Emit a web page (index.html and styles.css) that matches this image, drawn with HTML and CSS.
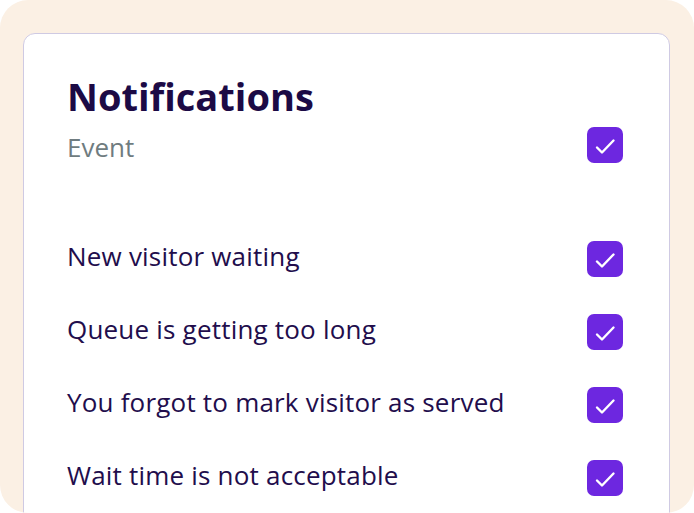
FILE: index.html
```html
<!DOCTYPE html>
<html lang="en">
<head>
  <meta charset="UTF-8">
  <meta name="viewport" content="width=device-width, initial-scale=1.0">
  <title>Notifications</title>
  <link rel="stylesheet" href="styles.css">
</head>
<body>

  <div class="frame">
    <div class="card">
      <h1>Notifications</h1>

      <div class="row head-row">
        <span class="event">Event</span>
        <span class="check"><svg viewBox="0 0 36 36"><polyline points="10,20.5 15,25.5 26.5,13.5"/></svg></span>
      </div>

      <div class="list">
        <div class="row">
          <span class="label">New visitor waiting</span>
          <span class="check"><svg viewBox="0 0 36 36"><polyline points="10,20.5 15,25.5 26.5,13.5"/></svg></span>
        </div>
        <div class="row">
          <span class="label">Queue is getting too long</span>
          <span class="check"><svg viewBox="0 0 36 36"><polyline points="10,20.5 15,25.5 26.5,13.5"/></svg></span>
        </div>
        <div class="row">
          <span class="label">You forgot to mark visitor as served</span>
          <span class="check"><svg viewBox="0 0 36 36"><polyline points="10,20.5 15,25.5 26.5,13.5"/></svg></span>
        </div>
        <div class="row">
          <span class="label">Wait time is not acceptable</span>
          <span class="check"><svg viewBox="0 0 36 36"><polyline points="10,20.5 15,25.5 26.5,13.5"/></svg></span>
        </div>
      </div>
    </div>
  </div>

</body>
</html>
```

FILE: styles.css
```css
* { margin: 0; padding: 0; box-sizing: border-box; font-family: 'Open Sans', 'Noto Sans', sans-serif; }
html, body { height: 100%; background: #ffffff; }

/* Outer beige panel */
.frame {
  height: 100%;
  background: #fbf0e4;
  border-radius: 28px;
  overflow: hidden;
  padding: 33px 24px 0 23px;
}

/* Card */
.card {
  background: #ffffff;
  border: 1.5px solid #cfcae3;
  border-radius: 12px;
  padding: 38px 46px 60px 43px;
  min-height: 560px;
}
.card h1 {
  font-size: 38px; line-height: 48px; font-weight: 700;
  color: #1c0a45;
}

/* Rows */
.row {
  display: flex; align-items: center; justify-content: space-between;
  height: 36px;
}
.head-row { margin-top: 7px; }
.event { font-size: 26px; color: #6f7c80; padding-top: 3px; }
.label { font-size: 26px; color: #220d4c; padding-bottom: 7px; letter-spacing: 0.2px; }

.list { display: flex; flex-direction: column; gap: 37px; margin-top: 78px; }

/* Checkbox */
.check {
  width: 36px; height: 36px; flex: none;
  background: #6d27e0; border-radius: 7px;
  display: flex;
}
.check svg { width: 36px; height: 36px; }
.check polyline {
  fill: none; stroke: #ffffff; stroke-width: 2.4;
  stroke-linecap: round; stroke-linejoin: round;
}
```
